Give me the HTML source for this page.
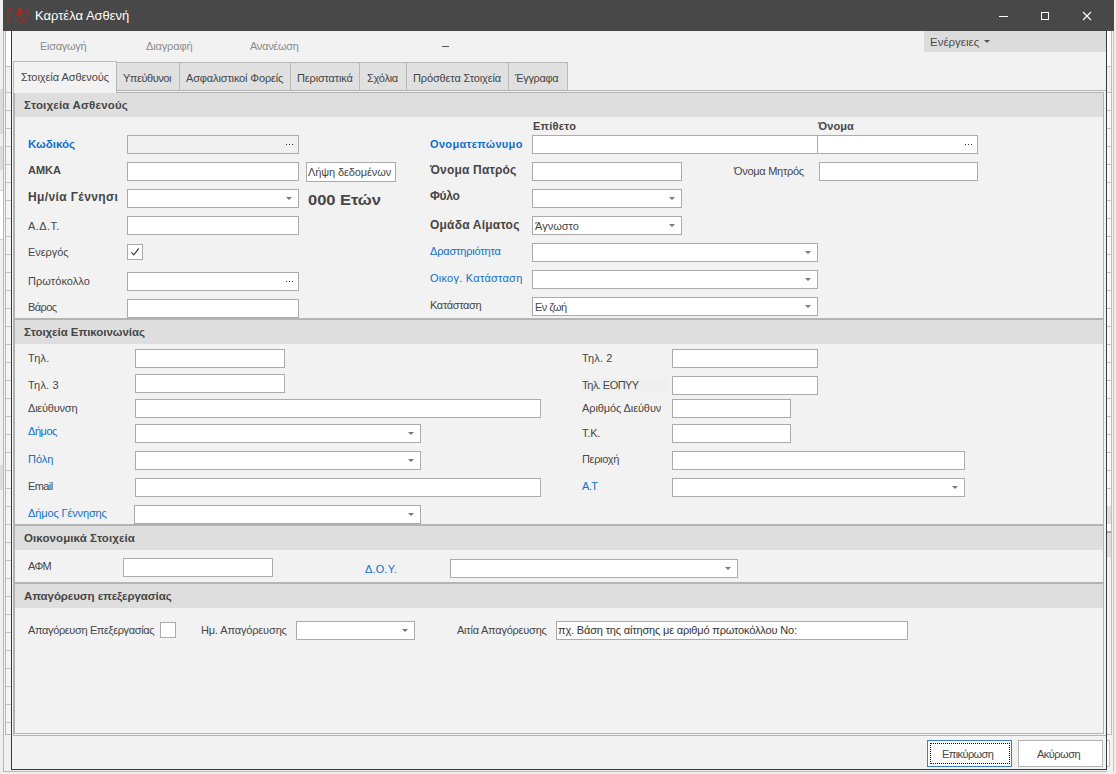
<!DOCTYPE html>
<html><head><meta charset="utf-8">
<style>
*{margin:0;padding:0;box-sizing:border-box}
html,body{width:1116px;height:774px;overflow:hidden;background:#f0f0f0;font-family:"Liberation Sans",sans-serif;font-size:11px;color:#464646;position:relative}
div,span,svg{position:absolute}
.t{white-space:nowrap;line-height:13px}
.bl{color:#0f6fd0}
.bd{font-weight:bold}
.sp{font-weight:bold;font-size:12px;line-height:14px}
.b{background:#fff;border:1px solid #ababab}
.dis{background:#f0f0f0}
.dd::after{content:"";position:absolute;right:6px;top:7px;border-left:3px solid transparent;border-right:3px solid transparent;border-top:3px solid #777}
.el::after{content:"";position:absolute;right:5px;top:8px;width:1px;height:1px;background:#333;box-shadow:-3px 0 0 #333,-6px 0 0 #333}
.hd{background:#dedede;left:15px;width:1088px;height:26px;border-top:2px solid #b4b4b4}
.tab{top:62px;height:29px;border:1px solid #b9b9b9;border-bottom:none;background:#e0e0e0}
</style></head><body>

<div style="left:0;top:0;width:4px;height:774px;background:#efefef"></div>
<div style="left:0;top:88px;width:3px;height:46px;background:#dcdcdc"></div>
<div style="left:0;top:146px;width:3px;height:24px;background:#dcdcdc"></div>
<div style="left:0;top:190px;width:3px;height:50px;background:#fff;border-top:1px solid #d0d0d0;border-bottom:1px solid #d0d0d0"></div>
<div style="left:0;top:465px;width:3px;height:25px;background:#dcdcdc"></div>
<div style="left:3px;top:30px;width:1px;height:742px;background:#b8b8b8"></div>
<div style="left:3px;top:771px;width:1110px;height:1px;background:#b8b8b8"></div>
<div style="left:0;top:0;width:3px;height:89px;background:#f0f0f0"></div>
<div style="left:4px;top:30px;width:7px;height:704px;background:#f2f2f2"></div>
<div style="left:6px;top:30px;width:5px;height:36px;background:#fff"></div>
<div style="left:6px;top:92px;width:5px;height:642px;background:repeating-linear-gradient(#c4c4c4 0,#c4c4c4 1px,#f4f4f4 1px,#f4f4f4 18px)"></div>
<div style="left:6px;top:66px;width:5px;height:1px;background:#c4c4c4"></div>
<div style="left:5px;top:30px;width:1px;height:704px;background:#b8b8b8"></div>
<div style="left:5px;top:734px;width:6px;height:1px;background:#b8b8b8"></div>
<div style="left:1107px;top:30px;width:6px;height:742px;background:#f2f2f2"></div>
<div style="left:1107px;top:30px;width:4px;height:36px;background:#fff"></div>
<div style="left:1107px;top:92px;width:4px;height:414px;background:repeating-linear-gradient(#c4c4c4 0,#c4c4c4 1px,#fafafa 1px,#fafafa 18px)"></div>
<div style="left:1107px;top:506px;width:4px;height:18px;background:#e0e0e0"></div>
<div style="left:1107px;top:524px;width:4px;height:7px;background:#fff"></div>
<div style="left:1107px;top:531px;width:4px;height:2px;background:#a8a8a8"></div>
<div style="left:1107px;top:533px;width:4px;height:24px;background:#dedede"></div>
<div style="left:1107px;top:734px;width:4px;height:1px;background:#bcbcbc"></div>
<div style="left:1107px;top:740px;width:3px;height:27px;border:1px solid #c0c0c0;border-left:none;background:#fff"></div>
<div style="left:1114px;top:456px;width:2px;height:8px;background:#fff"></div>
<div style="left:1114px;top:45px;width:2px;height:20px;background:#dcdcdc"></div>
<div style="left:1114px;top:130px;width:2px;height:42px;background:#dcdcdc"></div>
<div style="left:1114px;top:464px;width:2px;height:26px;background:#dcdcdc"></div>
<div style="left:1107px;top:66px;width:4px;height:1px;background:#c4c4c4"></div>
<div style="left:1111px;top:30px;width:1px;height:705px;background:#bcbcbc"></div>
<div style="left:1113px;top:30px;width:1px;height:742px;background:#c8c8c8"></div>
<div style="left:1114px;top:30px;width:2px;height:744px;background:#eeeeee"></div>
<div style="left:3px;top:0;width:1111px;height:31px;background:#484848"></div>
<svg style="left:4px;top:4px" width="28" height="24" viewBox="0 0 28 24">
 <ellipse cx="6.5" cy="5.3" rx="0.8" ry="2.4" fill="#c0231e"/>
 <path d="M6.7 9.6 Q3.4 9.4 3.4 12 Q3.6 14.5 6.5 16.7" stroke="#c0231e" stroke-width="1.1" fill="none" opacity="0.85"/>
 <ellipse cx="15.8" cy="6.6" rx="2" ry="2.6" fill="#c0231e"/>
 <path d="M16.4 10.2 Q11.6 9.8 11.4 13 Q11.8 16.2 18 19.5" stroke="#c0231e" stroke-width="1.1" fill="none" opacity="0.8"/>
 <path d="M16.6 10 L16.4 13.6" stroke="#c0231e" stroke-width="0.9" fill="none" opacity="0.7"/>
 <path d="M16.7 9.9 Q19.5 6.4 22.3 6.2 Q25 6 24.8 8.6 Q24.6 12.5 21.4 16.1" stroke="#c0231e" stroke-width="1.0" fill="none" opacity="0.8"/>
 <circle cx="19.7" cy="16.7" r="1.5" fill="#c0231e"/>
</svg>

<div class="t " style="left:35px;top:8px;font-size:13px;color:#fff;line-height:15px">Καρτέλα Ασθενή</div>

<div style="left:999px;top:16px;width:9px;height:1px;background:#fff"></div>
<div style="left:1041px;top:12px;width:8px;height:8px;border:1px solid #fff"></div>
<svg style="left:1082px;top:11px" width="10" height="10" viewBox="0 0 10 10"><path d="M1 1 L9 9 M9 1 L1 9" stroke="#fff" stroke-width="1.1"/></svg>
<div style="left:11px;top:31px;width:1096px;height:739px;background:#f2f2f2"></div>

<div class="t " style="left:40px;top:40px;color:#8c8c8c;letter-spacing:-0.286px">Εισαγωγή</div>
<div class="t " style="left:146px;top:40px;color:#8c8c8c;letter-spacing:-0.143px">Διαγραφή</div>
<div class="t " style="left:250px;top:40px;color:#8c8c8c;letter-spacing:-0.286px">Ανανέωση</div>
<div style="left:442px;top:46px;width:7px;height:1px;background:#555"></div>
<div style="left:924px;top:31px;width:182px;height:21px;background:#dcdcdc"></div>
<div class="t " style="left:930px;top:36px;font-size:11.5px;color:#4a4a4a;letter-spacing:0.000px">Ενέργειες</div>
<div style="left:984px;top:40px;border-left:3px solid transparent;border-right:3px solid transparent;border-top:3px solid #555"></div>
<div class="tab" style="left:116px;width:64px;height:28px"></div>
<div class="tab" style="left:179px;width:112px;height:28px"></div>
<div class="tab" style="left:290px;width:70px;height:28px"></div>
<div class="tab" style="left:359px;width:48px;height:28px"></div>
<div class="tab" style="left:406px;width:103px;height:28px"></div>
<div class="tab" style="left:508px;width:60px;height:28px"></div>
<div class="t " style="left:123px;top:72px;;letter-spacing:-0.463px">Υπεύθυνοι</div>
<div class="t " style="left:186px;top:72px;;letter-spacing:-0.139px">Ασφαλιστικοί Φορείς</div>
<div class="t " style="left:297px;top:72px;;letter-spacing:-0.160px">Περιστατικά</div>
<div class="t " style="left:367px;top:72px;;letter-spacing:-0.260px">Σχόλια</div>
<div class="t " style="left:413px;top:72px;;letter-spacing:-0.131px">Πρόσθετα Στοιχεία</div>
<div class="t " style="left:515px;top:72px;;letter-spacing:-0.350px">Έγγραφα</div>
<div style="left:13px;top:90px;width:1093px;height:646px;border:1px solid #b4b4b4;border-right:none;background:#f2f2f2"></div>
<div style="left:14px;top:92px;width:1090px;height:642px;border:1px solid #b4b4b4;background:#f2f2f2"></div>
<div class="tab" style="left:13px;top:61px;width:104px;height:32px;background:#f2f2f2"></div>
<div class="t " style="left:21px;top:71px;;letter-spacing:-0.062px">Στοιχεία Ασθενούς</div>
<div class="hd" style="top:93px;height:24px;border-top:none"></div>
<div class="hd" style="top:318px"></div>
<div class="hd" style="top:524px"></div>
<div class="hd" style="top:582px"></div>
<div class="t bd" style="left:24px;top:99px;font-size:11.5px;letter-spacing:0.188px">Στοιχεία Ασθενούς</div>
<div class="t bd" style="left:24px;top:326px;font-size:11.5px;letter-spacing:-0.050px">Στοιχεία Επικοινωνίας</div>
<div class="t bd" style="left:24px;top:532px;font-size:11.5px;letter-spacing:0.089px">Οικονομικά Στοιχεία</div>
<div class="t bd" style="left:24px;top:590px;font-size:11.5px;letter-spacing:-0.091px">Απαγόρευση επεξεργασίας</div>
<div class="t bd bl" style="left:28px;top:138px;font-size:11.5px;letter-spacing:0.000px">Κωδικός</div>
<div class="t bd" style="left:28px;top:164px;;letter-spacing:0.000px">ΑΜΚΑ</div>
<div class="t sp" style="left:28px;top:190px;;letter-spacing:0.385px">Ημ/νία Γέννησι</div>
<div class="t " style="left:28px;top:220px;;letter-spacing:0.400px">Α.Δ.Τ.</div>
<div class="t " style="left:28px;top:246px;;letter-spacing:-0.067px">Ενεργός</div>
<div class="t " style="left:28px;top:275px;;letter-spacing:0.056px">Πρωτόκολλο</div>
<div class="t " style="left:28px;top:301px;;letter-spacing:-0.600px">Βάρος</div>
<div class="b dis el" style="left:127px;top:135px;width:172px;height:19px;"></div>
<div class="b " style="left:127px;top:162px;width:172px;height:19px;"></div>
<div class="b dd" style="left:127px;top:189px;width:172px;height:19px;"></div>
<div class="b " style="left:127px;top:216px;width:172px;height:19px;"></div>
<div class="b" style="left:127px;top:244px;width:16px;height:16px"><svg style="left:3px;top:3px" width="10" height="10" viewBox="0 0 10 10"><path d="M0.4 4.4 L2.8 6.8 L7.8 0.4" stroke="#3a3a3a" stroke-width="1.2" fill="none"/></svg></div>
<div class="b el" style="left:127px;top:272px;width:172px;height:19px;"></div>
<div class="b " style="left:127px;top:299px;width:172px;height:19px;"></div>
<div class="b" style="left:306px;top:162px;width:90px;height:20px"></div>
<div class="t " style="left:308px;top:166px;;letter-spacing:-0.108px">Λήψη δεδομένων</div>
<div class="t " style="left:308px;top:191px;font-size:15px;line-height:17px;font-weight:bold;transform:scaleX(1.1);transform-origin:0 0;letter-spacing:-0.043px">000 Ετών</div>
<div class="t bd" style="left:533px;top:120px;font-size:11px;letter-spacing:0.267px">Επίθετο</div>
<div class="t bd" style="left:818px;top:120px;font-size:11px;letter-spacing:0.100px">Όνομα</div>
<div class="t bd bl" style="left:430px;top:138px;;letter-spacing:0.333px">Ονοματεπώνυμο</div>
<div class="b el" style="left:532px;top:135px;width:446px;height:19px;"></div>
<div style="left:817px;top:136px;width:1px;height:17px;background:#ababab"></div>
<div class="t sp" style="left:430px;top:163px;;letter-spacing:0.182px">Όνομα Πατρός</div>
<div class="b " style="left:532px;top:162px;width:150px;height:19px;"></div>
<div class="t " style="left:734px;top:165px;;letter-spacing:-0.282px">Όνομα Μητρός</div>
<div class="b " style="left:819px;top:162px;width:159px;height:19px;"></div>
<div class="t sp" style="left:430px;top:189px;;letter-spacing:-0.300px">Φύλο</div>
<div class="b dd" style="left:532px;top:189px;width:150px;height:19px;"></div>
<div class="t sp" style="left:430px;top:218px;;letter-spacing:0.208px">Ομάδα Αίματος</div>
<div class="b dd" style="left:532px;top:216px;width:150px;height:19px;"></div>
<div class="t " style="left:535px;top:220px;;letter-spacing:0.000px">Άγνωστο</div>
<div class="t bl" style="left:430px;top:245px;;letter-spacing:-0.175px">Δραστηριότητα</div>
<div class="b dd" style="left:532px;top:243px;width:286px;height:19px;"></div>
<div class="t bl" style="left:430px;top:272px;;letter-spacing:0.253px">Οικογ. Κατάσταση</div>
<div class="b dd" style="left:532px;top:270px;width:286px;height:19px;"></div>
<div class="t " style="left:430px;top:299px;;letter-spacing:-0.338px">Κατάσταση</div>
<div class="b dd" style="left:532px;top:297px;width:286px;height:19px;"></div>
<div class="t " style="left:535px;top:301px;;letter-spacing:-0.520px">Εν ζωή</div>
<div class="t " style="left:28px;top:352px;;letter-spacing:0.267px">Τηλ.</div>
<div class="b " style="left:135px;top:349px;width:150px;height:19px;"></div>
<div class="t " style="left:28px;top:379px;;letter-spacing:0.180px">Τηλ. 3</div>
<div class="b " style="left:135px;top:374px;width:150px;height:19px;"></div>
<div class="t " style="left:28px;top:402px;;letter-spacing:-0.213px">Διεύθυνση</div>
<div class="b " style="left:135px;top:399px;width:406px;height:19px;"></div>
<div class="t bl" style="left:28px;top:425px;;letter-spacing:-0.450px">Δήμος</div>
<div class="b dd" style="left:135px;top:424px;width:286px;height:19px;"></div>
<div class="t bl" style="left:28px;top:453px;;letter-spacing:0.000px">Πόλη</div>
<div class="b dd" style="left:135px;top:451px;width:286px;height:19px;"></div>
<div class="t " style="left:28px;top:480px;;letter-spacing:-0.600px">Email</div>
<div class="b " style="left:135px;top:478px;width:406px;height:19px;"></div>
<div class="t bl" style="left:28px;top:507px;;letter-spacing:-0.131px">Δήμος Γέννησης</div>
<div class="b dd" style="left:134px;top:505px;width:287px;height:19px;"></div>
<div class="t " style="left:582px;top:352px;;letter-spacing:0.140px">Τηλ. 2</div>
<div class="b " style="left:672px;top:349px;width:146px;height:19px;"></div>
<div style="left:582px;top:378px;width:86px;height:13px;background:#efefef"></div>
<div class="t " style="left:582px;top:379px;;letter-spacing:-0.556px">Τηλ. ΕΟΠΥΥ</div>
<div class="b " style="left:672px;top:376px;width:146px;height:19px;"></div>
<div style="left:582px;top:399px;width:79px;height:19px;overflow:hidden"><div class="t" style="left:0;top:3px;letter-spacing:-0.1px">Αριθμός Διεύθυνσης</div></div>
<div class="b " style="left:672px;top:399px;width:119px;height:19px;"></div>
<div class="t " style="left:582px;top:427px;;letter-spacing:-0.200px">Τ.Κ.</div>
<div class="b " style="left:672px;top:424px;width:119px;height:19px;"></div>
<div class="t " style="left:582px;top:453px;;letter-spacing:-0.333px">Περιοχή</div>
<div class="b " style="left:672px;top:451px;width:293px;height:19px;"></div>
<div class="t bl" style="left:582px;top:480px;;letter-spacing:-0.600px">Α.Τ</div>
<div class="b dd" style="left:672px;top:478px;width:293px;height:19px;"></div>
<div class="t " style="left:28px;top:560px;;letter-spacing:-0.600px">ΑΦΜ</div>
<div class="b " style="left:123px;top:558px;width:150px;height:19px;"></div>
<div class="t bl" style="left:365px;top:563px;;letter-spacing:0.180px">Δ.Ο.Υ.</div>
<div class="b dd" style="left:450px;top:559px;width:288px;height:19px;"></div>
<div class="t " style="left:28px;top:624px;;letter-spacing:-0.364px">Απαγόρευση Επεξεργασίας</div>
<div class="b" style="left:160px;top:622px;width:16px;height:16px"></div>
<div class="t " style="left:201px;top:624px;;letter-spacing:-0.143px">Ημ. Απαγόρευσης</div>
<div class="b dd" style="left:296px;top:621px;width:119px;height:19px;"></div>
<div class="t " style="left:457px;top:624px;;letter-spacing:-0.231px">Αιτία Απαγόρευσης</div>
<div class="b " style="left:556px;top:621px;width:352px;height:19px;"></div>
<div class="t " style="left:558px;top:624px;color:#333;letter-spacing:-0.167px">πχ. Βάση της αίτησης με αριθμό πρωτοκόλλου Νο:</div>

<div style="left:927px;top:740px;width:85px;height:27px;border:1px solid #3c7fd1;background:#fff"></div>
<div style="left:930px;top:743px;width:80px;height:21px;border:1px dotted #111"></div>
<div style="left:1018px;top:740px;width:85px;height:27px;border:1px solid #b4b4b4;background:#fff"></div>

<div class="t " style="left:942px;top:748px;;letter-spacing:-0.600px">Επικύρωση</div>
<div class="t " style="left:1037px;top:748px;;letter-spacing:-0.500px">Ακύρωση</div>
<div style="left:11px;top:31px;width:1px;height:739px;background:#3a3a3a"></div>
<div style="left:1106px;top:31px;width:1px;height:739px;background:#3a3a3a"></div>
<div style="left:11px;top:769px;width:1096px;height:1px;background:#3a3a3a"></div>
</body></html>
